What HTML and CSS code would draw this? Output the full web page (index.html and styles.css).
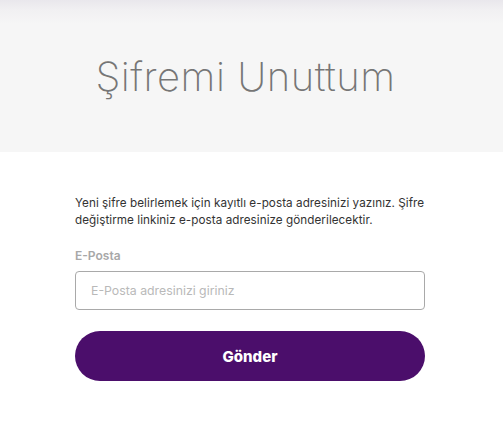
FILE: index.html
```html
<!DOCTYPE html>
<html lang="tr">
<head>
<meta charset="utf-8">
<link rel="stylesheet" href="styles.css">
</head>
<body>
<header class="hero">
  <h1 class="hero-title">Şifremi Unuttum</h1>
</header>
<main class="content">
  <form class="form">
    <p class="intro">Yeni şifre belirlemek için kayıtlı e-posta adresinizi yazınız. Şifre değiştirme linkiniz e-posta adresinize gönderilecektir.</p>
    <label class="label" for="email">E-Posta</label>
    <input class="input" id="email" type="text" placeholder="E-Posta adresinizi giriniz">
    <button class="button" type="button">Gönder</button>
  </form>
</main>
</body>
</html>
```
FILE: styles.css
```css
html, body {
  margin: 0;
  padding: 0;
  background: #ffffff;
}
body {
  font-family: "Inter", "Roboto", sans-serif;
  width: 503px;
}
.hero {
  height: 152px;
  background: linear-gradient(to bottom, #e9e7ec 0px, #f1f0f2 10px, #f6f6f6 24px, #f6f6f6 100%);
  display: flex;
  align-items: center;
  justify-content: center;
  padding-right: 12px;
  box-sizing: border-box;
}
.hero-title {
  margin: 0;
  font-weight: 250;
  font-size: 40px;
  color: #767676;
  letter-spacing: 0.5px;
}
.content {
  padding: 43px 78px 0 75px;
}
.form {
  display: flex;
  flex-direction: column;
}
.intro {
  margin: 0;
  font-size: 11.7px;
  line-height: 17px;
  color: #333333;
  letter-spacing: 0.05px;
}
.label {
  margin-top: 19px;
  font-size: 12px;
  font-weight: 600;
  color: #a8a8a8;
}
.input {
  margin-top: 8px;
  height: 39px;
  box-sizing: border-box;
  border: 1px solid #a9a9a9;
  border-radius: 4px;
  padding: 0 15px;
  font-family: inherit;
  font-size: 12.3px;
  color: #333;
  outline: none;
}
.input::placeholder {
  color: #b9b9b9;
}
.button {
  margin-top: 21px;
  height: 50px;
  border: none;
  border-radius: 25px;
  background: #4b0e6b;
  color: #ffffff;
  font-family: inherit;
  font-size: 15px;
  font-weight: 800;
}
```
